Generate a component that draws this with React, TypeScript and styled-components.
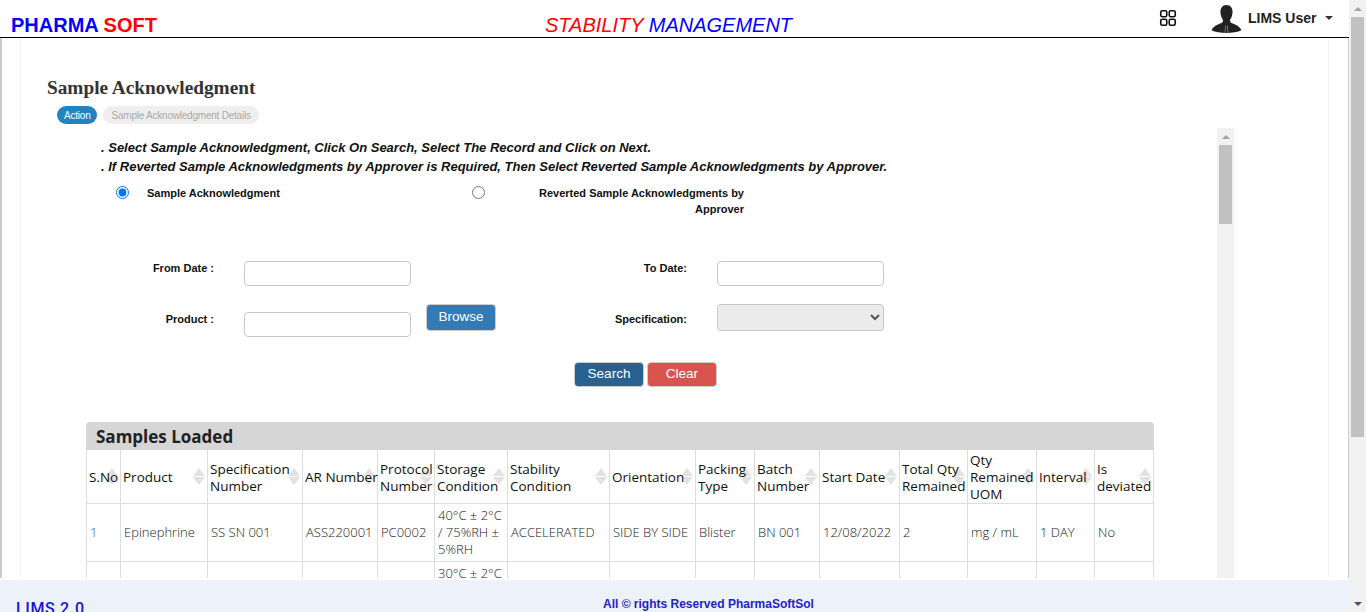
import styled, { createGlobalStyle } from "styled-components";

const GlobalStyle = createGlobalStyle`
  html, body {
    margin: 0;
    padding: 0;
    overflow: hidden;
    background: #fff;
  }
`;

const Page = styled.div`
  display: flex;
  width: 1366px;
  height: 612px;
  overflow: hidden;
`;

const Main = styled.div`
  display: flex;
  flex-direction: column;
  width: 1349px;
  height: 612px;
`;

const Header = styled.header`
  display: flex;
  align-items: center;
  flex: none;
  height: 37px;
  border-bottom: 1px solid #000;
  font-family: "Liberation Sans", Arial, sans-serif;
`;

const Logo = styled.div`
  width: 545px;
  padding: 14px 0 0 11px;
  box-sizing: border-box;
  font-size: 20px;
  font-weight: bold;
`;

const Colored = styled.span<{ $color: string }>`
  color: ${(p) => p.$color};
`;

const AppTitle = styled.div`
  width: 614px;
  padding-top: 13px;
  font-size: 20px;
  font-style: italic;
`;

const GridIcon = styled.svg`
  width: 18px;
  height: 18px;
  margin-top: -1px;
  margin-right: 34px;
`;

const UserBox = styled.div`
  display: flex;
  align-items: center;
  height: 37px;
`;

const Avatar = styled.svg`
  width: 31px;
  height: 28px;
  margin-top: 1px;
`;

const UserName = styled.span`
  margin-left: 6px;
  margin-top: -2px;
  font-size: 14px;
  font-weight: bold;
  color: #222;
`;

const Caret = styled.span`
  width: 0;
  height: 0;
  margin: -1px 0 0 9px;
  border-top: 4px solid #333;
  border-left: 4px solid transparent;
  border-right: 4px solid transparent;
`;

const Body = styled.div`
  flex: none;
  display: flex;
  height: 540px;
  box-sizing: border-box;
  padding: 0 19px 0 18px;
  border-left: 2px solid #ccc;
  border-right: 1px solid #ccc;
`;

const Panel = styled.div`
  display: flex;
  flex-direction: column;
  flex: 1;
  min-width: 0;
  border-left: 1px solid #f2f2f2;
  border-right: 1px solid #f2f2f2;
`;

const Heading = styled.h2`
  margin: 39px 0 0 26px;
  height: 22px;
  font-family: "Liberation Serif", "DejaVu Serif", serif;
  font-size: 19.3px;
  line-height: 22px;
  font-weight: bold;
  color: #333;
`;

const Pills = styled.div`
  display: flex;
  gap: 6px;
  margin: 7px 0 4px 36px;
`;

const Pill = styled.span<{ $active?: boolean }>`
  height: 18px;
  padding: 0 ${(p) => (p.$active ? 7 : 8)}px;
  border-radius: 9px;
  font-family: "Liberation Sans", Arial, sans-serif;
  font-size: 10px;
  line-height: 19px;
  letter-spacing: -0.22px;
  color: ${(p) => (p.$active ? "#fff" : "#aaa")};
  background: ${(p) => (p.$active ? "#1f84bf" : "#eee")};
`;

const ScrollRow = styled.div`
  display: flex;
  flex: 1;
  min-height: 0;
`;

const Content = styled.div`
  width: 1196px;
  flex: none;
  box-sizing: border-box;
  padding: 10px 0 0 65px;
  overflow: hidden;
`;

const Instructions = styled.div`
  margin-left: 15px;
  font-family: "Liberation Sans", Arial, sans-serif;
  font-size: 13px;
  line-height: 19px;
  font-weight: bold;
  font-style: italic;
  color: #111;
`;

const RadioRow = styled.div`
  display: flex;
  height: 32px;
  margin: 9px 0 44px 30px;
`;

const RadioOption = styled.label<{ $width: number }>`
  display: flex;
  align-items: flex-start;
  width: ${(p) => p.$width}px;
`;

const Radio = styled.input`
  flex: none;
  width: 13px;
  height: 13px;
  margin: 1px 0 0 0;
`;

const FieldLabel = styled.span<{ $gap?: number; $width?: number }>`
  margin-left: ${(p) => p.$gap ?? 0}px;
  width: ${(p) => (p.$width ? `${p.$width}px` : "auto")};
  text-align: ${(p) => (p.$width ? "right" : "left")};
  font-family: "Liberation Sans", Arial, sans-serif;
  font-size: 11px;
  line-height: 16px;
  font-weight: bold;
  color: #111;
`;

const FormGrid = styled.div`
  display: grid;
  grid-template-columns: 158px 182px 69px 222px 167px;
  grid-template-rows: 25px 33px;
  row-gap: 18px;
  width: 798px;
`;

const FormLabel = styled.label<{ $top?: number }>`
  box-sizing: border-box;
  margin-top: ${(p) => p.$top ?? 0}px;
  padding-right: 30px;
  text-align: right;
  font-family: "Liberation Sans", Arial, sans-serif;
  font-size: 11px;
  line-height: 14px;
  font-weight: bold;
  color: #111;
`;

const TextInput = styled.input<{ $top?: number }>`
  box-sizing: border-box;
  width: 167px;
  height: 25px;
  margin: ${(p) => p.$top ?? 0}px 0 0 0;
  padding: 0 6px;
  border: 1px solid #c8c8c8;
  border-radius: 4px;
  background: #fff;
  outline: none;
`;

const Select = styled.select`
  box-sizing: border-box;
  width: 167px;
  height: 27px;
  border: 1px solid #c8c8c8;
  border-radius: 4px;
  background-color: #ebebeb;
  color: #555;
`;

const Button = styled.button<{ $bg: string; $tall?: boolean }>`
  box-sizing: border-box;
  height: ${(p) => (p.$tall ? 27 : 25)}px;
  width: 70px;
  padding: 0 0 2px;
  border: 1px solid #ccc;
  border-radius: 4px;
  background: ${(p) => p.$bg};
  color: #fff;
  font-family: "Liberation Sans", Arial, sans-serif;
  font-size: 13.5px;
  line-height: 18px;
`;

const Actions = styled.div`
  display: flex;
  gap: 3px;
  margin: 25px 0 35px 488px;
`;

const TableCard = styled.section`
  width: 1068px;
  font-family: "Open Sans", sans-serif;
`;

const CardTitle = styled.div`
  box-sizing: border-box;
  height: 28px;
  padding-left: 10px;
  border-radius: 4px 4px 0 0;
  background: #d6d6d6;
  font-size: 17px;
  line-height: 29px;
  font-weight: 700;
  color: #222;
`;

const Table = styled.table`
  width: 1067px;
  table-layout: fixed;
  border-collapse: collapse;
  font-size: 13px;
  line-height: 17px;
`;

const Th = styled.th<{ $w: number }>`
  position: relative;
  width: ${(p) => p.$w}px;
  height: 53px;
  box-sizing: border-box;
  padding: 1px 0 0 2px;
  border: 1px solid #ddd;
  border-top: 0;
  text-align: left;
  font-size: 13.5px;
  font-weight: 500;
  color: #111;

  &::before,
  &::after {
    content: "";
    position: absolute;
    right: 2px;
    border-left: 6px solid transparent;
    border-right: 6px solid transparent;
    z-index: 0;
  }
  &::before {
    top: 18px;
    border-bottom: 8px solid #e2e2e2;
  }
  &::after {
    top: 27px;
    border-top: 8px solid #e2e2e2;
  }
`;

const ThText = styled.span`
  position: relative;
  top: 1px;
  z-index: 1;
`;

const Td = styled.td<{ $link?: boolean }>`
  height: 58px;
  box-sizing: border-box;
  padding: 0 3px;
  border: 1px solid #ddd;
  font-weight: 300;
  color: ${(p) => (p.$link ? "#1f6fb0" : "#222")};
`;

const Track = styled.div<{ $edge?: boolean }>`
  display: flex;
  flex-direction: column;
  flex: none;
  width: 17px;
  background: #f1f1f1;
  height: ${(p) => (p.$edge ? "612px" : "auto")};
`;

const Thumb = styled.div<{ $top: number; $height: number }>`
  width: 13px;
  height: ${(p) => p.$height}px;
  margin: ${(p) => p.$top}px 2px 0;
  background: #c1c1c1;
`;

const ArrowBox = styled.div<{ $auto?: boolean }>`
  display: flex;
  align-items: center;
  justify-content: center;
  height: 17px;
  margin-top: ${(p) => (p.$auto ? "auto" : "0")};
`;

const ArrowUp = styled.span`
  width: 0;
  height: 0;
  border-bottom: 4px solid #a3a3a3;
  border-left: 4px solid transparent;
  border-right: 4px solid transparent;
`;

const ArrowDown = styled.span`
  width: 0;
  height: 0;
  border-top: 4px solid #505050;
  border-left: 4px solid transparent;
  border-right: 4px solid transparent;
`;

const Footer = styled.footer`
  display: flex;
  flex: none;
  height: 32px;
  margin-top: 2px;
  overflow: hidden;
  background: #edf1f9;
  font-family: "Liberation Sans", Arial, sans-serif;
`;

const Version = styled.div`
  width: 603px;
  padding: 19px 0 0 16px;
  box-sizing: border-box;
  font-family: Roboto, sans-serif;
  font-size: 16px;
  line-height: 19px;
  font-weight: 500;
  letter-spacing: 0.65px;
  color: #1515d8;
`;

const Rights = styled.div`
  padding-top: 17px;
  font-size: 12px;
  line-height: 15px;
  font-weight: bold;
  color: #2323c8;
`;

const columns: [string, number][] = [
  ["S.No", 34],
  ["Product", 87],
  ["Specification Number", 95],
  ["AR\u00a0Number", 75],
  ["Protocol Number", 57],
  ["Storage Condition", 73],
  ["Stability Condition", 102],
  ["Orientation", 86],
  ["Packing Type", 59],
  ["Batch Number", 65],
  ["Start Date", 80],
  ["Total Qty Remained", 68],
  ["Qty Remained UOM", 69],
  ["Interval", 58],
  ["Is deviated", 59],
];

const firstRow = [
  "1",
  "Epinephrine",
  "SS SN 001",
  "ASS220001",
  "PC0002",
  "40°C ± 2°C / 75%RH ± 5%RH",
  "ACCELERATED",
  "SIDE BY SIDE",
  "Blister",
  "BN 001",
  "12/08/2022",
  "2",
  "mg / mL",
  "1 DAY",
  "No",
];

const secondRow = ["", "", "", "", "", "30°C ± 2°C / 65%RH ± 5%RH", "", "", "", "", "", "", "", "", ""];

function App() {
  return (
    <Page>
      <GlobalStyle />
      <Main>
        <Header>
          <Logo>
            <Colored $color="#0000ff">PHARMA</Colored> <Colored $color="#ff0000">SOFT</Colored>
          </Logo>
          <AppTitle>
            <Colored $color="#ff0000">STABILITY</Colored> <Colored $color="#0000ff">MANAGEMENT</Colored>
          </AppTitle>
          <GridIcon viewBox="0 0 18 18" fill="none" stroke="#111" strokeWidth="1.6">
            <rect x="1.75" y="1.75" width="6" height="6" rx="1.5" />
            <rect x="10.25" y="1.75" width="6" height="6" rx="1.5" />
            <rect x="1.75" y="10.25" width="6" height="6" rx="1.5" />
            <rect x="10.25" y="10.25" width="6" height="6" rx="1.5" />
          </GridIcon>
          <UserBox>
            <Avatar viewBox="0 0 31 28">
              <path
                fill="#222"
                d="M15.5 0C19.8 0 21.8 3.4 21.5 7.5C21.3 10.5 20.3 13 19 15C18.8 16.5 19.5 17.6 21 18.2C25 19.8 28.6 21.2 30.5 25.2C27 27 21 28 15.5 28C10 28 4 27 0.5 25.2C2.4 21.2 6 19.8 10 18.2C11.5 17.6 12.2 16.5 12 15C10.7 13 9.7 10.5 9.5 7.5C9.2 3.4 11.2 0 15.5 0Z"
              />
              <path fill="none" stroke="#8a8a8a" strokeWidth="0.8" d="M14.6 20.5L14 28M16.4 20.5L17 28" />
            </Avatar>
            <UserName>LIMS User</UserName>
            <Caret />
          </UserBox>
        </Header>
        <Body>
          <Panel>
            <Heading>Sample Acknowledgment</Heading>
            <Pills>
              <Pill $active>Action</Pill>
              <Pill>Sample Acknowledgment Details</Pill>
            </Pills>
            <ScrollRow>
              <Content>
                <Instructions>
                  . Select Sample Acknowledgment, Click On Search, Select The Record and Click on Next.
                  <br />
                  . If Reverted Sample Acknowledgments by Approver is Required, Then Select Reverted Sample
                  Acknowledgments by Approver.
                </Instructions>
                <RadioRow>
                  <RadioOption $width={356}>
                    <Radio type="radio" name="mode" defaultChecked />
                    <FieldLabel $gap={18}>Sample Acknowledgment</FieldLabel>
                  </RadioOption>
                  <RadioOption $width={272}>
                    <Radio type="radio" name="mode" />
                    <FieldLabel $gap={54} $width={205}>
                      Reverted Sample Acknowledgments by Approver
                    </FieldLabel>
                  </RadioOption>
                </RadioRow>
                <FormGrid>
                  <FormLabel>From Date :</FormLabel>
                  <TextInput />
                  <span />
                  <FormLabel>To Date:</FormLabel>
                  <TextInput />
                  <FormLabel $top={8}>Product :</FormLabel>
                  <TextInput $top={8} />
                  <Button $bg="#337ab7" $tall>
                    Browse
                  </Button>
                  <FormLabel $top={8}>Specification:</FormLabel>
                  <Select />
                </FormGrid>
                <Actions>
                  <Button $bg="#286090">Search</Button>
                  <Button $bg="#d9534f">Clear</Button>
                </Actions>
                <TableCard>
                  <CardTitle>Samples Loaded</CardTitle>
                  <Table>
                    <thead>
                      <tr>
                        {columns.map(([title, width]) => (
                          <Th key={title} $w={width}>
                            <ThText>{title}</ThText>
                          </Th>
                        ))}
                      </tr>
                    </thead>
                    <tbody>
                      <tr>
                        {firstRow.map((v, i) => (
                          <Td key={i} $link={i === 0}>
                            {v}
                          </Td>
                        ))}
                      </tr>
                      <tr>
                        {secondRow.map((v, i) => (
                          <Td key={i}>{v}</Td>
                        ))}
                      </tr>
                    </tbody>
                  </Table>
                </TableCard>
              </Content>
              <Track>
                <ArrowBox>
                  <ArrowUp />
                </ArrowBox>
                <Thumb $top={0} $height={79} />
              </Track>
            </ScrollRow>
          </Panel>
        </Body>
        <Footer>
          <Version>LIMS 2.0</Version>
          <Rights>All © rights Reserved PharmaSoftSol</Rights>
        </Footer>
      </Main>
      <Track $edge>
        <ArrowBox>
          <ArrowUp />
        </ArrowBox>
        <Thumb $top={0} $height={420} />
        <ArrowBox $auto>
          <ArrowDown />
        </ArrowBox>
      </Track>
    </Page>
  );
}

export default App;
